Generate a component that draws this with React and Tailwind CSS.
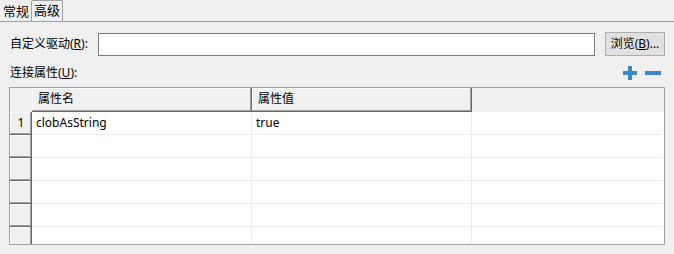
import React from "react";

const raised =
  "shadow-[inset_-1px_-1px_0_#696969,inset_-2px_-2px_0_#a0a0a0,inset_1px_1px_0_#ffffff]";

function Plus() {
  return (
    <svg width="16" height="16" viewBox="0 0 16 16">
      <rect x="6" y="1" width="4" height="14" fill="#3a88d4" />
      <rect x="1" y="6" width="14" height="4" fill="#3a88d4" />
    </svg>
  );
}
function Minus() {
  return (
    <svg width="16" height="16" viewBox="0 0 16 16">
      <rect x="0" y="6" width="16" height="4" fill="#3a88d4" />
    </svg>
  );
}

export default function App() {
  const rows = [
    ["1", "clobAsString", "true"],
    ["", "", ""],
    ["", "", ""],
    ["", "", ""],
    ["", "", ""],
    ["", "", ""],
  ];
  return (
    <div
      className="w-[674px] h-[254px] bg-[#f0f0f0] text-[12px] text-black overflow-hidden"
      style={{ fontFamily: '"Noto Sans", "Noto Sans CJK SC", sans-serif' }}
    >
      <div className="flex h-[22px] items-end border-b border-[#a0a0a0] pl-[2px]">
        <div className="h-[19px] px-[1px] text-[13px] leading-[19px]">常规</div>
        <div className="ml-[1px] h-[21px] border border-b-0 border-[#a0a0a0] rounded-t-[2px] px-[2px] text-[13px] leading-[19px] bg-[#f0f0f0]">
          高级
        </div>
      </div>
      <div className="px-[9px]">
        <div className="mt-[10px] flex h-[24px] items-center">
          <div className="w-[89px] pl-[1px]">
            自定义驱动(<u>R</u>):
          </div>
          <div className="h-[23px] w-[497px] border border-[#7a7a7a] bg-white" />
          <div className="ml-[10px] flex h-[24px] w-[60px] items-center justify-center border border-[#adadad] bg-[#e1e1e1]">
            浏览(<u>B</u>)...
          </div>
        </div>
        <div className="mt-[8px] flex h-[17px] items-center justify-between">
          <div className="pl-[1px]">
            连接属性(<u>U</u>):
          </div>
          <div className="flex items-center gap-[7px] pr-[4px]">
            <Plus />
            <Minus />
          </div>
        </div>
        <div className="mt-[6px] h-[158px] w-[656px] overflow-hidden border border-[#a0a0a0] bg-white">
          <div className="flex h-[24px] bg-[#f0f0f0]">
            <div className="w-[22px]" />
            <div className={`w-[220px] pl-[6px] leading-[22px] ${raised}`}>属性名</div>
            <div className={`w-[220px] pl-[6px] leading-[22px] ${raised}`}>属性值</div>
            <div className="flex-1" />
          </div>
          {rows.map((r, i) => (
            <div key={i} className="flex h-[23px] shrink-0">
              <div
                className={`w-[22px] shrink-0 bg-[#f0f0f0] text-center leading-[22px] ${raised}`}
              >
                {r[0]}
              </div>
              <div className="w-[220px] shrink-0 border-r border-b border-[#ececec] pl-[4px] leading-[22px]">
                {r[1]}
              </div>
              <div className="w-[220px] shrink-0 border-r border-b border-[#ececec] pl-[4px] leading-[22px]">
                {r[2]}
              </div>
              <div className="flex-1 border-b border-[#ececec] mr-[2px]" />
            </div>
          ))}
        </div>
      </div>
    </div>
  );
}
